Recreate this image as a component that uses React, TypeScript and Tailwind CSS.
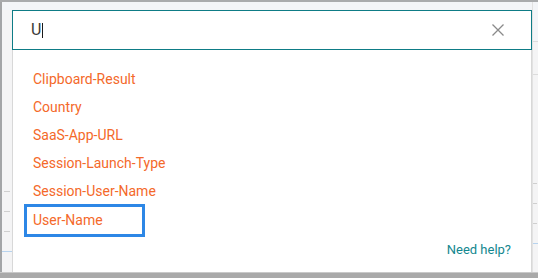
import React from "react";

const items = [
  "Clipboard-Result",
  "Country",
  "SaaS-App-URL",
  "Session-Launch-Type",
  "Session-User-Name",
];

export default function App() {
  return (
    <div
      className="w-[538px] h-[278px] flex flex-col overflow-hidden bg-[#f3f5f8]"
      style={{ fontFamily: "Roboto, 'Liberation Sans', sans-serif" }}
    >
      <div className="h-[2px] bg-[#a9abad] shrink-0" />
      <div className="flex flex-1 min-h-0">
        {/* left window border */}
        <div className="w-[2px] bg-[#a3a5a7] shrink-0" />
        {/* left background strip */}
        <div className="w-[10px] shrink-0 flex flex-col bg-[#f4f4f5]">
          <div className="h-[8px] bg-[#f3f5f8]" />
          <div className="h-[181px]" />
          <div className="ml-[2px] w-[6px] h-px bg-[#cfcfcf]" />
          <div className="h-[19px]" />
          <div className="ml-[2px] w-[6px] h-px bg-[#cfcfcf]" />
          <div className="h-[19px]" />
          <div className="ml-[2px] w-[6px] h-px bg-[#cfcfcf]" />
          <div className="h-[19px]" />
          <div className="h-px bg-[#b7d3ee]" />
        </div>
        {/* main column */}
        <div className="w-[520px] shrink-0 flex flex-col pt-[8px]">
          <div className="h-[40px] border border-[#0e7c86] bg-white flex items-center pl-[18px] pr-[27px]">
            <span className="text-[16px] text-[#3a3a3a] leading-none">U</span>
            <span className="w-px h-[15px] bg-[#1a1a1a] ml-[1px]" />
            <span className="flex-1" />
            <svg width="12" height="12" viewBox="0 0 12 12" className="shrink-0">
              <path d="M0.5 0.5 L11.5 11.5 M11.5 0.5 L0.5 11.5" stroke="#8a8a8a" strokeWidth="1.3" fill="none" />
            </svg>
          </div>
          <div className="flex-1 bg-white border-l border-r border-[#d8d8d8] flex flex-col pt-[15px]">
            {items.map((t) => (
              <div
                key={t}
                className="h-[28px] flex items-center ml-[20px] text-[14px] text-[#f4692a]"
              >
                {t}
              </div>
            ))}
            <div className="mt-[2px] h-[27px] w-[115px] ml-[14px] flex items-center pl-[6px] text-[14px] text-[#f4692a] outline-[3px] outline-solid outline-[#2d87e6]">
              User-Name
            </div>
            <div className="flex justify-end pr-[20px] mt-[8px]">
              <span className="text-[13px] text-[#13878f] leading-[16px]">Need help?</span>
            </div>
          </div>
        </div>
        {/* right background strip */}
        <div className="flex-1 flex flex-col bg-[#f4f4f5] border-l border-[#e2e2e2]">
          <div className="h-[39px] bg-[#f3f5f8]" />
          <div className="h-px bg-[#dcdcdc]" />
          <div className="h-[32px]" />
          <div className="h-px bg-[#dcdcdc]" />
          <div className="h-[108px]" />
          <div className="w-[4px] h-px bg-[#cfcfcf]" />
          <div className="h-[19px]" />
          <div className="w-[4px] h-px bg-[#cfcfcf]" />
          <div className="h-[19px]" />
          <div className="w-[4px] h-px bg-[#cfcfcf]" />
          <div className="h-[19px]" />
          <div className="h-px bg-[#b7d3ee]" />
        </div>
      </div>
      <div className="h-[6px] shrink-0 bg-[#a9a9a9] border-t border-[#c9c9c9]" />
    </div>
  );
}
